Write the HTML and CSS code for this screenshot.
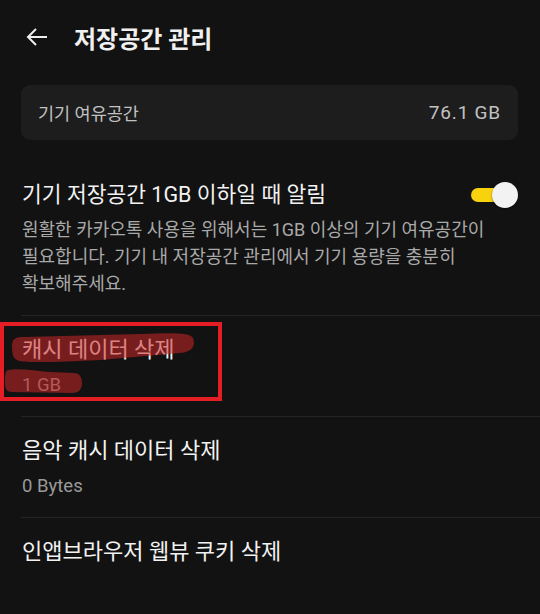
FILE: index.html
```html
<!DOCTYPE html>
<html lang="ko">
<head>
  <meta charset="UTF-8" />
  <meta name="viewport" content="width=device-width, initial-scale=1.0" />
  <title>저장공간 관리</title>
  <link rel="stylesheet" href="styles.css">
</head>
<body>
  <header class="top-bar">
    <svg class="back" width="24" height="20" viewBox="0 0 24 20">
      <path d="M22 10H3M11 2L3 10l8 8" fill="none" stroke="#eeeeee" stroke-width="2" />
    </svg>
    <h1>저장공간 관리</h1>
  </header>

  <main>
    <div class="free-card">
      <span>기기 여유공간</span>
      <span class="free-size">76.1 GB</span>
    </div>

    <section class="item alert-item">
      <div class="item-head">
        <div class="item-title">기기 저장공간 1GB 이하일 때 알림</div>
        <div class="switch"><span class="knob"></span></div>
      </div>
      <p class="item-desc">원활한 카카오톡 사용을 위해서는 1GB 이상의 기기 여유공간이 필요합니다. 기기 내 저장공간 관리에서 기기 용량을 충분히 확보해주세요.</p>
    </section>

    <section class="item marked">
      <div class="item-title">캐시 데이터 삭제</div>
      <div class="item-sub">1 GB</div>
      <!-- 캡처에 그려진 빨간 표시 -->
      <svg class="scribble" width="230" height="90" viewBox="0 0 230 90">
        <path d="M12 30C12 22 16 21 25 21L140 18C170 17 190 16 193 22C196 30 192 36 180 37L100 44C60 46 30 47 20 45C13 44 12 38 12 30Z" fill="rgba(202,38,38,0.55)" />
        <path d="M8 54C20 52 35 55 50 56L74 57C80 57 82 62 82 67C82 73 79 77 72 77L12 76C6 76 5 72 5 66C5 60 5 55 8 54Z" fill="rgba(202,38,38,0.55)" />
      </svg>
      <div class="red-box"></div>
    </section>

    <section class="item">
      <div class="item-title">음악 캐시 데이터 삭제</div>
      <div class="item-sub">0 Bytes</div>
    </section>

    <section class="item last">
      <div class="item-title">인앱브라우저 웹뷰 쿠키 삭제</div>
    </section>
  </main>
</body>
</html>
```

FILE: styles.css
```css
body {
  margin: 0;
  background-color: #121212;
  color: #f2f2f2;
  font-family: Roboto, "Noto Sans CJK KR", sans-serif;
  overflow: hidden;
}

.top-bar {
  display: flex;
  align-items: center;
  height: 74px;
  padding-left: 25px;
  box-sizing: border-box;
}

.back {
  margin-right: 25px;
}

h1 {
  margin: 0;
  font-size: 24px;
  font-weight: 700;
  color: #f0f0f0;
}

main {
  padding-left: 21px;
}

.free-card {
  display: flex;
  justify-content: space-between;
  align-items: center;
  height: 55px;
  margin-top: 11px;
  margin-right: 22px;
  padding: 0 17px;
  background-color: #1d1d1d;
  border-radius: 9px;
  font-size: 17.5px;
  color: #c2c2c2;
}

.free-size {
  font-size: 19px;
  letter-spacing: 0.8px;
}

.item {
  position: relative;
  padding: 19px 0 18px 1px;
  border-bottom: 1px solid #242424;
}

.alert-item {
  padding-top: 40px;
  padding-bottom: 18px;
}

.item-head {
  display: flex;
  justify-content: space-between;
  align-items: center;
  padding-right: 22px;
}

.item-title {
  font-size: 22px;
  line-height: 30px;
  color: #f2f2f2;
}

.alert-item .item-title {
  font-size: 21.5px;
}

.item-desc {
  margin: 6px 22px 0 0;
  font-size: 18px;
  line-height: 27px;
  color: #a9a9a9;
  word-break: keep-all;
}

.item-sub {
  margin-top: 7px;
  font-size: 18.5px;
  line-height: 26px;
  color: #9a9a9a;
}

.switch {
  position: relative;
  width: 34px;
  height: 14px;
  margin-right: 13px;
  background-color: #f9d20e;
  border-radius: 7px;
}

.knob {
  position: absolute;
  top: -6px;
  right: -13px;
  width: 26px;
  height: 26px;
  border-radius: 50%;
  background-color: #f2f2f2;
  box-shadow: 0 1px 2px rgba(0, 0, 0, 0.5);
}

.last {
  border-bottom: none;
}

.scribble {
  position: absolute;
  left: -21px;
  top: 0;
  pointer-events: none;
}

.red-box {
  position: absolute;
  left: -21px;
  top: 6px;
  width: 214px;
  height: 71px;
  border: 4px solid #e51d24;
}
```
